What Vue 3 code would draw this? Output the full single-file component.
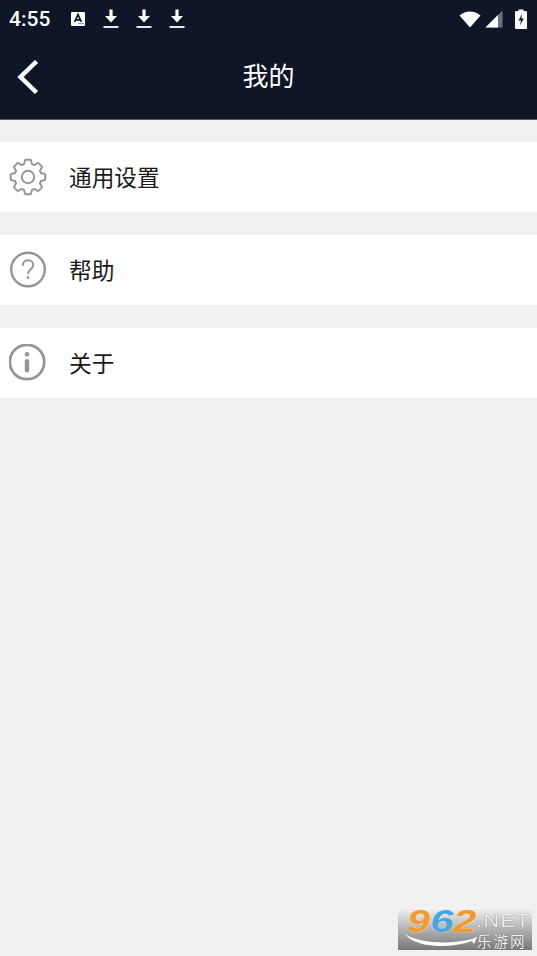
<template>
    <div class="page">
        <div class="top">
            <div class="status">
                <span class="time">4:55</span>
                <svg class="note-a" width="16" height="16" viewBox="0 0 16 16">
                    <path d="M2 1h12a1 1 0 0 1 1 1v12a1 1 0 0 1-1 1H2a1 1 0 0 1-1-1V2a1 1 0 0 1 1-1z" fill="#fff"/>
                    <path d="M4.600 11 8 3.600 11.400 11M5.800 8.800h4.400" fill="none" stroke="#0e1628" stroke-width="1.700"/>
                    <path d="M8 12.600h6" stroke="#8a8f9a" stroke-width="1"/>
                </svg>
                <svg v-for="n in 3" :key="n" class="dl" width="16" height="20" viewBox="0 0 16 20">
                    <path d="M6.400 0.500h3.200v6.500H14L8 13.500 2 7h4.400z" fill="#fff"/>
                    <path d="M0.500 18h15" stroke="#fff" stroke-width="1.800"/>
                </svg>
                <div class="status-right">
                    <svg width="22" height="18" viewBox="0 0 22 18">
                        <path d="M0.500 5.500C6.500 0 15.500 0 21.500 5.500L11 17.500z" fill="#fff"/>
                    </svg>
                    <svg class="signal" width="18" height="18" viewBox="0 0 18 18">
                        <path d="M0.500 17.500 17.500 0.500V17.500z" fill="#6d717b"/>
                        <path d="M0.500 17.500 13 5V17.500z" fill="#fff"/>
                    </svg>
                    <svg class="battery" width="12" height="20" viewBox="0 0 12 20">
                        <path d="M3.500 0.500h5V2H11a1 1 0 0 1 1 1v16a1 1 0 0 1-1 1H1a1 1 0 0 1-1-1V3a1 1 0 0 1 1-1h2.500z" fill="#fff"/>
                        <path d="M7 5 3.500 11.500H6L5 16.500 8.800 9.500H6.300z" fill="#0e1628"/>
                    </svg>
                </div>
            </div>
            <div class="bar">
                <svg class="back" width="24" height="36" viewBox="0 0 24 36">
                    <path d="M20.500 2.500 4.500 18l16 15.500" fill="none" stroke="#fff" stroke-width="4.500"/>
                </svg>
                <span class="title">我的</span>
            </div>
        </div>

        <div class="row" v-for="item in items" :key="item.name">
            <div class="icon">
                <svg v-if="item.icon == 'gear'" width="38" height="38" viewBox="0 0 38 38" fill="none" stroke="#959595" stroke-width="1.900" stroke-linejoin="round">
                    <path :d="gearPath"/>
                    <circle cx="19" cy="19" r="6.200"/>
                </svg>
                <svg v-if="item.icon == 'help'" width="38" height="38" viewBox="0 0 38 38" fill="none" stroke="#959595">
                    <circle cx="19" cy="18.500" r="16.800" stroke-width="2.400"/>
                    <path d="M13.800 14.700c0-3.400 2.300-5.400 5.300-5.400s5.200 2 5.200 4.700c0 4.300-5.300 4.300-5.300 9" stroke-width="2"/>
                    <circle cx="19" cy="26.700" r="1.400" fill="#959595" stroke="none"/>
                </svg>
                <svg v-if="item.icon == 'info'" class="info" width="38" height="38" viewBox="0 0 38 38" fill="none" stroke="#959595">
                    <circle cx="18" cy="18" r="17.200" stroke-width="2.800"/>
                    <circle cx="18" cy="10.300" r="2.300" fill="#959595" stroke="none"/>
                    <rect x="15.800" y="15" width="4.400" height="13.500" rx="2.200" fill="#959595" stroke="none"/>
                </svg>
            </div>
            <span class="name">{{ item.name }}</span>
        </div>

        <div class="mark">
            <span class="num"><b class="o">9</b><b class="b">6</b><b class="o">2</b></span>
            <span class="net">.NET</span>
            <span class="cn">乐游网</span>
            <svg class="swoosh" width="74" height="16" viewBox="0 0 74 16">
                <path d="M1 1C14 10 46 12 68 6l5-2-3 7-2-3C44 16 12 15 1 1z" fill="#fff"/>
            </svg>
        </div>
    </div>
</template>

<script setup>
const items = [
    { name: '通用设置', icon: 'gear' },
    { name: '帮助', icon: 'help' },
    { name: '关于', icon: 'info' },
]

// 齿轮外圈
const makeGear = () => {
    const teeth = 8
    let d = ''
    for (let i = 0; i < teeth; i++) {
        const a = (i / teeth) * Math.PI * 2 - Math.PI / 2
        const pts = [[-0.3, 13.500], [-0.16, 17.500], [0.16, 17.500], [0.3, 13.500]]
        pts.forEach(([o, r], j) => {
            const x = (19 + Math.cos(a + o) * r).toFixed(1)
            const y = (19 + Math.sin(a + o) * r).toFixed(1)
            d += (i == 0 && j == 0 ? 'M' : 'L') + x + ' ' + y + ' '
        })
    }
    return d + 'Z'
}
const gearPath = makeGear()
</script>

<style scoped>
.page {
    position: relative;
    width: 537px;
    height: 956px;
    background: #f0f0f0;
    overflow: hidden;
    font-family: "Noto Sans CJK SC", "Liberation Sans", sans-serif;
}

.top {
    height: 119px;
    background: #0e1628;
    border-bottom: 1px solid #5b5f68;
    margin-bottom: 22px;
}

.status {
    display: flex;
    align-items: center;
    height: 38px;
    padding: 0 10px 0 9px;
    color: #fff;
}

.time {
    font: 500 21px Roboto, sans-serif;
    width: 61px;
}

.note-a {
    margin-right: 17px;
}

.dl {
    margin-right: 17px;
}

.status-right {
    display: flex;
    align-items: center;
    margin-left: auto;
    gap: 4px;
}

.signal {
    margin-right: 8px;
}

.bar {
    position: relative;
    height: 81px;
    display: flex;
    align-items: center;
    justify-content: center;
    padding-bottom: 8px;
    box-sizing: border-box;
}

.back {
    position: absolute;
    left: 16px;
    top: 21px;
}

.title {
    font-size: 26px;
    color: #fff;
}

.row {
    display: flex;
    align-items: center;
    height: 70px;
    background: #fff;
    margin-bottom: 23px;
    padding-left: 9px;
}

.icon {
    width: 38px;
    height: 38px;
    margin-right: 22px;
}

.name {
    font-size: 22.700px;
    color: #1a1a1a;
    padding-bottom: 2px;
}

.mark {
    position: absolute;
    right: 5px;
    bottom: 6px;
    width: 134px;
    height: 43px;
    background: linear-gradient(#f6f6f6, #b4b4b4 50%, #787878);
}

.num {
    position: absolute;
    left: 9px;
    top: -1px;
    font: italic 32px/30px "Liberation Sans", sans-serif;
    transform: scaleX(1.300);
    transform-origin: left top;
    text-shadow: 0 0 1px #fff;
}

.num b {
    font-weight: 700;
}

.o {
    color: #f39a2d;
}

.b {
    color: #4aa6de;
}

.net {
    position: absolute;
    left: 78px;
    top: 4px;
    font: 19px/20px "Liberation Sans", sans-serif;
    letter-spacing: 1px;
    color: #eee;
    transform: scaleX(1.150);
    transform-origin: left top;
    text-shadow: 0 0 1px #555;
}

.cn {
    position: absolute;
    left: 79px;
    top: 25px;
    font-size: 14.500px;
    line-height: 18px;
    letter-spacing: 2px;
    color: #f4f4f4;
    text-shadow: 0 0 1px #444;
}

.swoosh {
    position: absolute;
    left: 6px;
    bottom: 1px;
}
</style>
